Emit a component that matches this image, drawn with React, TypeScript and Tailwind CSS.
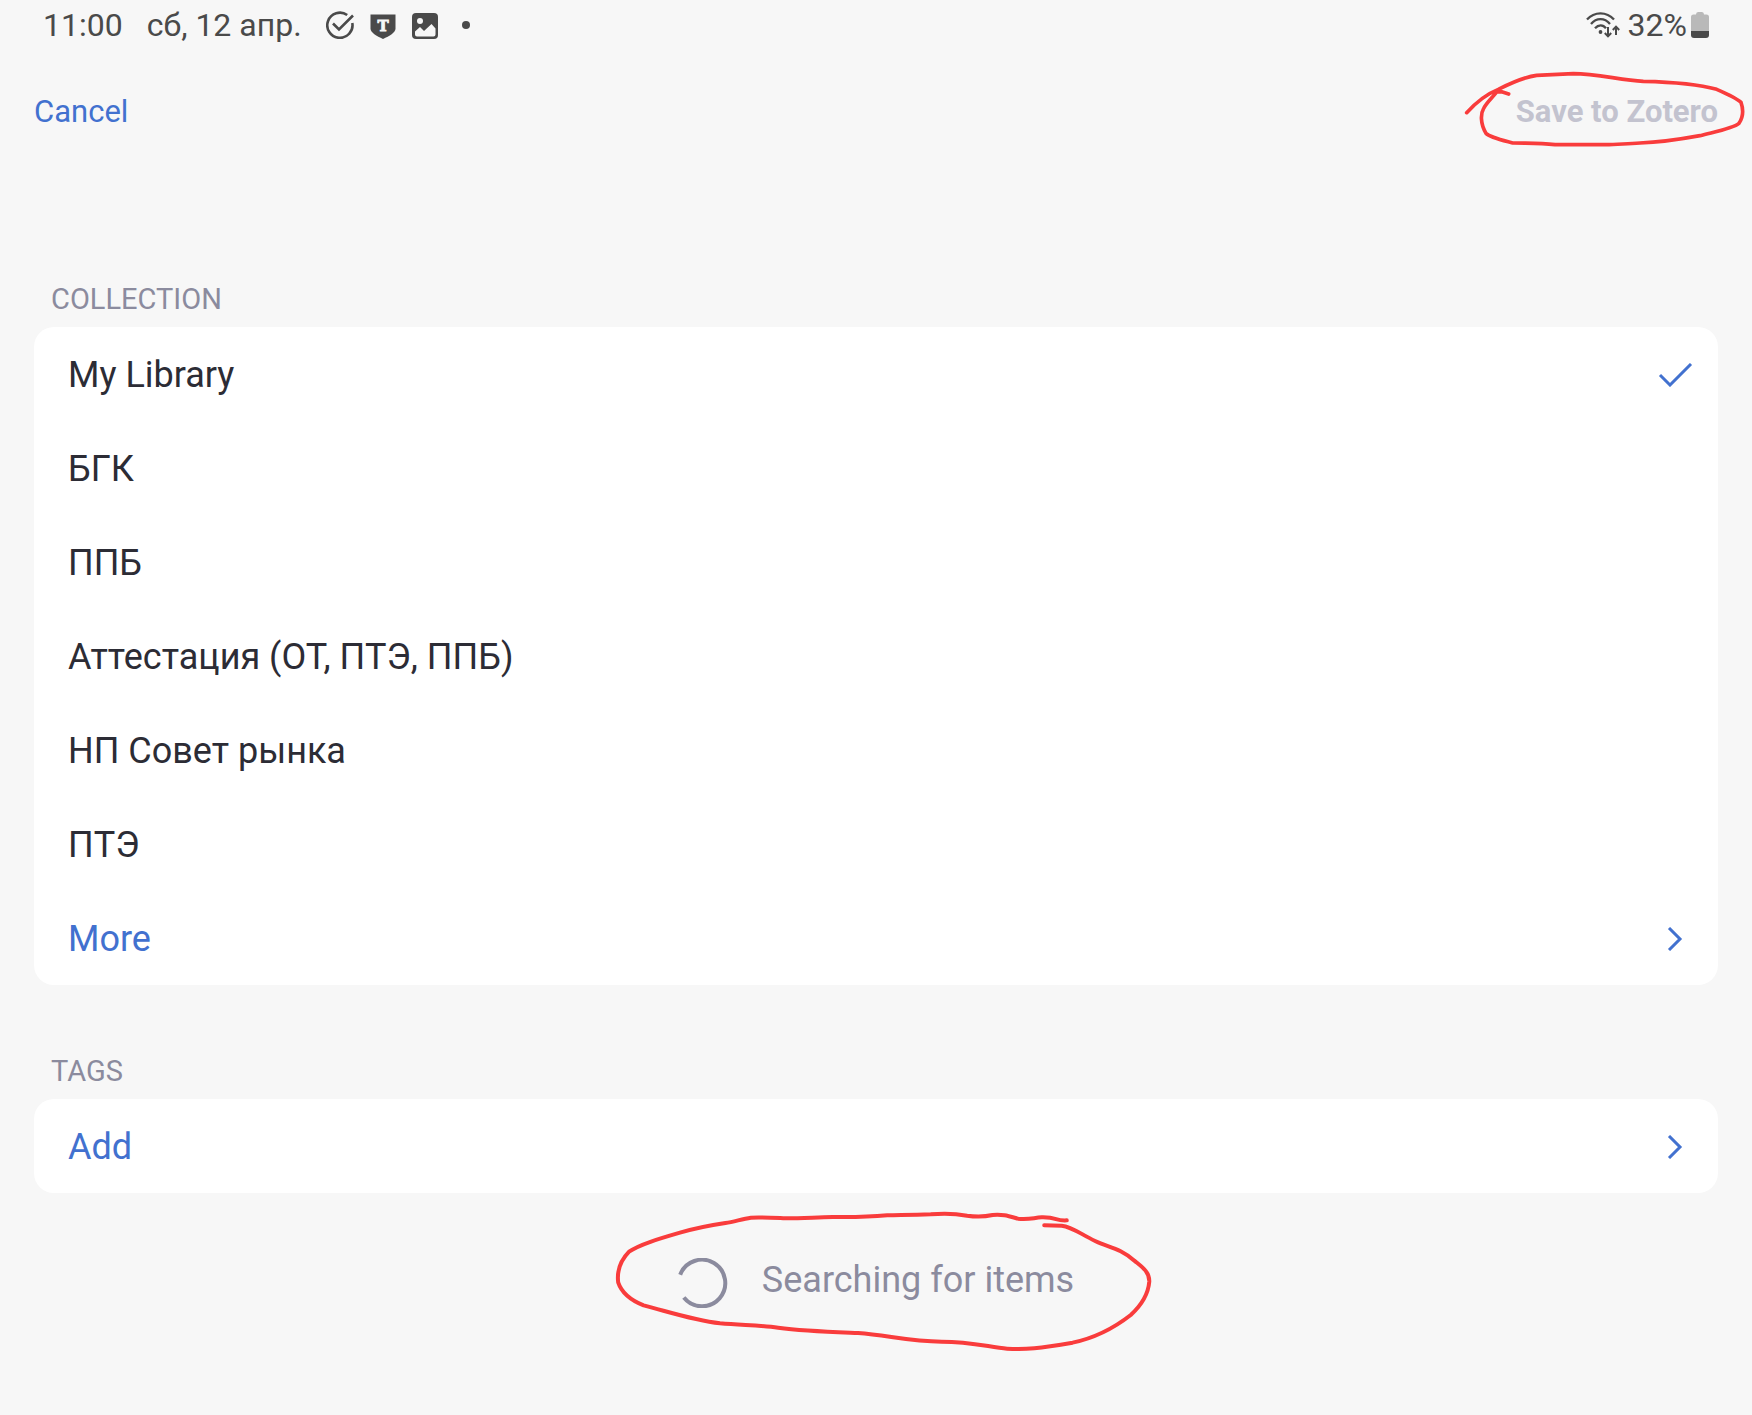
import { useState } from "react"

const collections = [
  "My Library",
  "БГК",
  "ППБ",
  "Аттестация (ОТ, ПТЭ, ППБ)",
  "НП Совет рынка",
  "ПТЭ",
]

function StatusBar() {
  return (
    <div className="flex h-[50px] items-center justify-between px-[43px] text-[32px] leading-[38px] text-[#4a4a4a]">
      <div className="flex items-center">
        <span>11:00</span>
        <span className="ml-6">сб, 12 апр.</span>
        <svg className="ml-6 h-7 w-7" viewBox="0 0 28 28" fill="none" stroke="currentColor" strokeWidth="2.6">
          <path d="M21.200 4A12.600 12.600 0 1 0 26.300 12" />
          <path d="M7 12.500l6 6L27 4.500" />
        </svg>
        <svg className="ml-4 h-7 w-[26px]" viewBox="0 0 26 28">
          <path d="M.5 3.500h25v14c0 4-6 7.500-12.500 10.500C6.500 25 .5 21.500 .5 17.500z" fill="currentColor" />
          <text x="13" y="20" textAnchor="middle" fontSize="15" fontWeight="700" fill="#f7f7f7" stroke="#f7f7f7" strokeWidth="0.8" fontFamily="DejaVu Serif">
            T
          </text>
        </svg>
        <svg className="ml-4 h-7 w-[26px]" viewBox="0 0 26 28">
          <rect y="2" width="26" height="26" rx="4" fill="currentColor" />
          <circle cx="8" cy="10" r="3" fill="#f7f7f7" />
          <path d="M3 20.500l5-4.500 4 4 7.500-7 4 4.500V23.500a2 2 0 0 1-2 2H5a2 2 0 0 1-2-2z" fill="#f7f7f7" />
        </svg>
        <span className="ml-6 h-2 w-2 rounded-full bg-[#4a4a4a]" />
      </div>
      <div className="flex items-center">
        <svg className="mr-2 h-[26px] w-[34px]" viewBox="0 0 34 26" fill="none" stroke="currentColor" strokeWidth="2.300">
          <path d="M1 7.500C8.500-.800 20.500-.800 28 7.500" />
          <path d="M5 12C10.500 5.500 18.500 5.500 24 12" />
          <path d="M9 16.300c3.500-4 8-4 11 0" />
          <circle cx="14.500" cy="20" r="1.900" fill="currentColor" stroke="none" />
          <path d="M22 15v9M18.800 21l3.200 3.400 3.200-3.400M30 23v-8.500M26.800 18l3.200-3.400 3.200 3.400" strokeWidth="2" />
        </svg>
        <span>32%</span>
        <svg className="ml-1 h-[26px] w-[18px]" viewBox="0 0 18 26">
          <path d="M5 2.500Q5 0 7 0h4q2 0 2 2.500h2.500q2.500 0 2.500 2.500v14H0V5q0-2.500 2.500-2.500z" fill="#b9b9b9" />
          <path d="M0 19h18v4q0 3-3 3H3q-3 0-3-3z" fill="currentColor" />
        </svg>
      </div>
    </div>
  )
}

function Chevron() {
  return (
    <svg className="mr-5 h-6 w-4" viewBox="0 0 16 24" fill="none" stroke="currentColor" strokeWidth="3">
      <path d="M2 1l11 11L2 23" />
    </svg>
  )
}

export default function App() {
  const [selected, setSelected] = useState("My Library")

  return (
    <div className="relative min-h-screen overflow-hidden bg-[#f7f7f7] font-[Roboto,sans-serif] text-[#2c2c35]">
      <StatusBar />

      <header className="flex h-[124px] items-center justify-between px-[34px] text-[31px] leading-[38px]">
        <button className="text-[#4271cf]">Cancel</button>
        <div className="relative">
          <button className="font-bold text-[#c3c3cf]" disabled>
            Save to Zotero
          </button>
          {/* Red marker around the button */}
          <svg
            className="pointer-events-none absolute -right-[34px] -top-[93px] h-[160px] w-[312px]"
            viewBox="0 0 936 480"
            fill="none"
            stroke="#f93c3c"
            strokeWidth="11"
            strokeLinecap="round"
            strokeLinejoin="round"
          >
            <path d="M80 338C110 305 145 280 175 268C215 248 260 230 290 226L400 221C470 221 540 240 610 244C700 246 780 254 830 268C860 281 890 295 903 307C911 330 909 352 897 370C880 385 830 394 780 407C720 418 660 427 600 429C550 431 520 435 490 434L345 434C300 428 270 430 218 429C185 420 150 412 138 400C120 370 122 340 131 325C142 305 160 290 170 276L185 275L206 282" />
          </svg>
        </div>
      </header>

      <main className="px-[34px] pt-[106px]">
        <fieldset>
          <legend className="h-[47px] px-[17px] text-[29px] leading-[38px] text-[#8b8b9e]">COLLECTION</legend>
          <div className="rounded-[20px] bg-white text-[36px] leading-[42px]">
            {collections.map((name) => (
              <label key={name} className="flex h-[94px] items-center justify-between pl-[34px] pt-0.5">
                <input
                  type="radio"
                  name="collection"
                  className="sr-only"
                  checked={selected === name}
                  onChange={() => setSelected(name)}
                />
                <span>{name}</span>
                {selected === name && (
                  <svg className="mr-6 h-6 w-9 text-[#4271cf]" viewBox="0 0 36 24" fill="none" stroke="currentColor" strokeWidth="3">
                    <path d="M2 12l10 10L33 1" />
                  </svg>
                )}
              </label>
            ))}
            <button className="flex h-[94px] w-full items-center justify-between pl-[34px] pr-[15px] pt-0.5 text-[#4271cf]">
              More
              <Chevron />
            </button>
          </div>
        </fieldset>

        <section className="pt-[67px]">
          <h2 className="h-[47px] px-[17px] text-[29px] leading-[38px] text-[#8b8b9e]">TAGS</h2>
          <button className="flex h-[94px] w-full items-center justify-between rounded-[20px] bg-white pl-[34px] pr-[15px] pt-0.5 text-[36px] leading-[42px] text-[#4271cf]">
            Add
            <Chevron />
          </button>
        </section>

        <div className="mt-[65px] flex justify-center">
          <div className="relative flex items-start gap-[34px] text-[36px] leading-[44px] text-[#8b8b9e]" role="status">
            <svg className="h-[50px] w-[50px]" viewBox="0 0 50 50" fill="none" stroke="currentColor" strokeWidth="4">
              <path d="M2.200 16.700A23.300 23.300 0 1 1 5.800 39.600" />
            </svg>
            Searching for items
            {/* Red marker around the loading message */}
            <svg
              className="pointer-events-none absolute -left-[78px] -top-[63px] h-[170px] w-[570px]"
              viewBox="0 0 1568 510"
              preserveAspectRatio="none"
              fill="none"
              stroke="#f93c3c"
              strokeWidth="4"
              strokeLinecap="round"
              strokeLinejoin="round"
            >
              <path
                vectorEffect="non-scaling-stroke"
                d="M1284 76C1250 78 1260 66 1215 67C1190 69 1180 74 1150 71C1120 62 1110 58 1080 60C1055 66 1035 66 1010 62C970 54 940 55 910 58C860 60 830 60 790 61C740 66 700 67 640 66C590 67 560 70 510 70C470 68 440 66 415 68C390 72 370 80 345 84C290 93 260 100 220 113C160 132 110 148 80 170C55 198 46 225 50 262C60 295 90 318 120 331C200 354 260 376 330 385C390 391 440 390 490 398C560 408 620 410 710 414C790 420 850 440 940 440C1020 440 1070 456 1120 461C1170 465 1210 460 1300 443C1370 427 1420 394 1460 360C1490 330 1508 300 1511 260C1512 230 1490 215 1470 197C1430 158 1400 158 1362 138C1320 116 1300 96 1270 92L1222 91"
              />
            </svg>
          </div>
        </div>
      </main>
    </div>
  )
}
